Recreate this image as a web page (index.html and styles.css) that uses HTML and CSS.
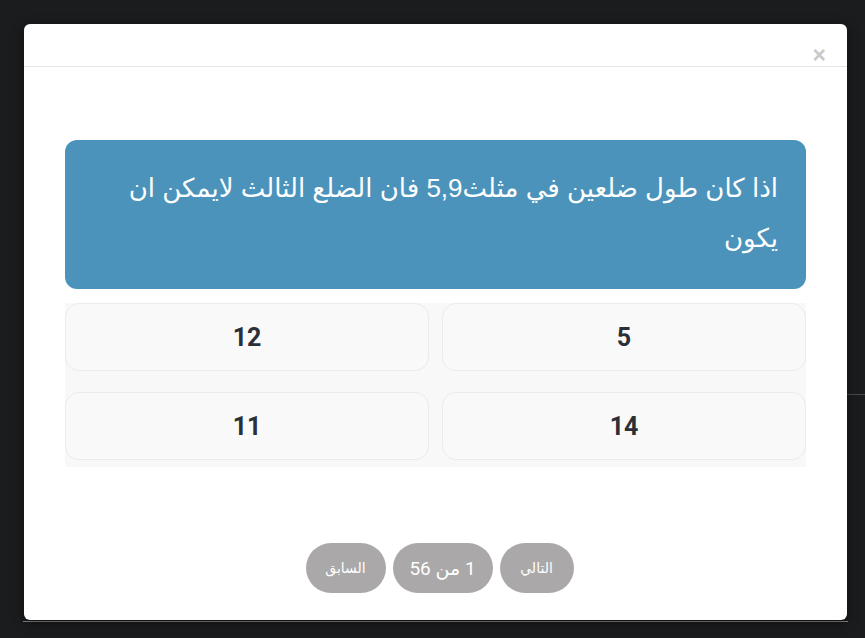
FILE: index.html
```html
<!DOCTYPE html>
<html lang="ar">
<head>
<meta charset="utf-8">
<title>Quiz</title>
<link rel="stylesheet" href="styles.css">
</head>
<body>
<div class="backdrop">
  <div class="page-line page-line-right"></div>
  <div class="page-line page-line-bottom"></div>
  <div class="modal">
    <div class="modal-header">
      <span class="close">×</span>
    </div>
    <div class="modal-body">
      <div class="question" dir="rtl">اذا كان طول ضلعين في مثلث5,9 فان الضلع الثالث لايمكن ان يكون</div>
      <div class="answers">
        <div class="answer">12</div>
        <div class="answer">5</div>
        <div class="answer">11</div>
        <div class="answer">14</div>
      </div>
    </div>
    <div class="modal-footer" dir="rtl">
      <button class="pill pill-next">التالي</button>
      <button class="pill pill-count">1 من 56</button>
      <button class="pill pill-prev">السابق</button>
    </div>
  </div>
</div>
</body>
</html>
```
FILE: styles.css
```css
html, body {
  margin: 0;
  padding: 0;
  background: #1b1c1e;
}
.backdrop {
  position: relative;
  width: 865px;
  height: 638px;
  padding-top: 24px;
  box-sizing: border-box;
  font-family: "Liberation Sans", "DejaVu Sans", sans-serif;
}
.page-line {
  position: absolute;
  background: #4a4b4d;
  height: 1px;
}
.page-line-right {
  left: 847px;
  right: 0;
  top: 394px;
}
.page-line-bottom {
  left: 23px;
  width: 825px;
  top: 621px;
  background: #8a8b8c;
}
.modal {
  position: relative;
  margin-left: 24px;
  width: 823px;
  height: 596px;
  background: #ffffff;
  border-radius: 6px;
  box-shadow: 0 3px 12px rgba(0, 0, 0, 0.5);
  display: flex;
  flex-direction: column;
}
.modal-header {
  height: 42px;
  border-bottom: 1px solid #e5e5e5;
  display: flex;
  justify-content: flex-end;
  align-items: flex-end;
  padding-right: 21px;
}
.close {
  font-family: "Liberation Sans", sans-serif;
  font-size: 23px;
  font-weight: 700;
  color: #c9c9c9;
  line-height: 20px;
  margin-bottom: 1px;
}
.modal-body {
  padding: 73px 41px 0 41px;
}
.question {
  background: #4b93bb;
  color: #ffffff;
  border-radius: 12px;
  font-size: 26px;
  line-height: 50px;
  padding: 23px 28px 26px 28px;
  text-align: right;
  font-family: "Liberation Sans", "DejaVu Sans", sans-serif;
}
.answers {
  margin-top: 14px;
  background: #f8f8f8;
  display: grid;
  grid-template-columns: 1fr 1fr;
  column-gap: 13px;
  row-gap: 21px;
  padding-bottom: 7px;
}
.answer {
  height: 66px;
  border: 1px solid #ebebeb;
  border-radius: 14px;
  background: #f9f9f9;
  display: flex;
  align-items: center;
  justify-content: center;
  font-family: Roboto, sans-serif;
  font-weight: 700;
  font-size: 25px;
  color: #2b3036;
}
.modal-footer {
  margin-top: auto;
  padding-bottom: 27px;
  display: flex;
  justify-content: center;
  gap: 7px;
  padding-left: 8px;
}
.pill {
  border: none;
  height: 50px;
  border-radius: 25px;
  background: #aaa8a8;
  color: #ffffff;
  font-family: Roboto, "DejaVu Sans", sans-serif;
  padding: 0;
  white-space: nowrap;
}
.pill-next {
  width: 74px;
  font-size: 14px;
}
.pill-prev {
  width: 80px;
  font-size: 14px;
}
.pill-count {
  font-size: 19px;
  width: 100px;
}
```
